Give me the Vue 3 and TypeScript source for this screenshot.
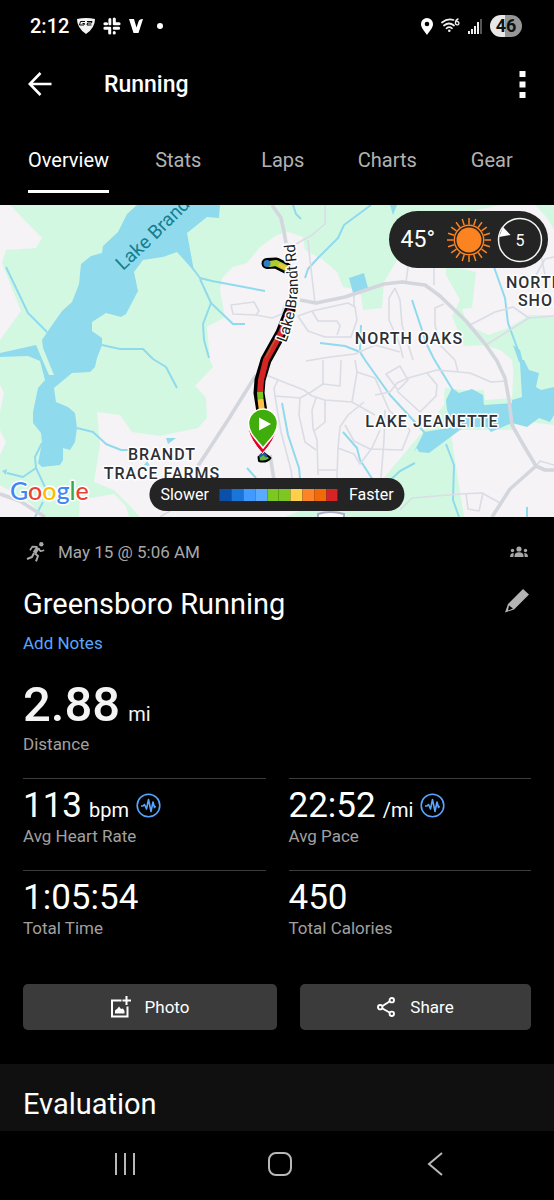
<script setup lang="ts">
import { ref } from 'vue'

interface Metric {
  value: string
  unit?: string
  label: string
  insight?: boolean
}

const tabs: string[] = ['Overview', 'Stats', 'Laps', 'Charts', 'Gear']
const activeTab = ref<string>('Overview')

const paceColors: string[] = [
  '#0b4fa8', '#1976d8', '#4299ff', '#5aabff', '#7cc820',
  '#7cc820', '#fdd04a', '#fc8426', '#f16a0a', '#d62323',
]

const metrics: Metric[] = [
  { value: '113', unit: 'bpm', label: 'Avg Heart Rate', insight: true },
  { value: '22:52', unit: '/mi', label: 'Avg Pace', insight: true },
  { value: '1:05:54', label: 'Total Time' },
  { value: '450', label: 'Total Calories' },
]

const sunRays: number[] = Array.from({ length: 20 }, (_, i) => i * 18)

const majorRoads: string[] = [
  'M272 205 L281 218 L284 232 L286 243',
  'M300 300 L316 303 L345 297 L384 284 L402 282 L425 285 L440 296 L466 321 L486 345 L497 361 L505 378 L509 400 L512 425 L524 446 L536 466',
  'M554 470 L545 470 L536 466 L510 489 L492 517',
  'M256 375 L228 420 L198 466',
  'M270 455 L274 480',
  'M0 494 L20 501 L45 517',
]

const minorRoads: string[] = [
  'M325 205 L325 224 L312 235 L296 244',
  'M308 240 L310 260 L315 303',
  'M231 305 L254 302 L259 311 L256 315 L233 314 Z',
  'M256 315 L272 318 L282 314 L285 302',
  'M298 316 L312 311 L348 303 L355 307 L357 320 L351 337 L325 337 L308 331 Z',
  'M312 311 L318 321 L337 321 L340 326 L337 335',
  'M354 296 L354 306',
  'M306 361 L330 357 L355 354 L375 345 L400 352',
  'M266 375 L286 383 L304 390 L312 396 L325 400 L352 402 L375 415',
  'M278 380 L274 388 L275 396 L300 398 L311 392 L323 384 L340 386 L341 360',
  'M300 398 L299 415 L305 442 L316 450',
  'M275 396 L281 432 L291 470 L292 478',
  'M316 398 L312 410 L313 428 L317 440 L318 475',
  'M325 400 L325 422 L314 431',
  'M323 384 L323 360',
  'M364 402 L348 415 L340 427 L338 448 L337 478',
  'M317 470 L338 470',
  'M338 448 L354 454 L360 464 L372 448 L380 430',
  'M345 425 L354 441 L370 449 L402 450 L410 430',
  'M355 360 L357 372 L352 402',
  'M357 372 L375 378 L389 410 L410 430',
  'M375 395 L390 392 L397 383 L408 378 L437 370 L470 373 L491 382 L507 381',
  'M386 374 L400 366 L408 380 L398 390 Z',
  'M427 373 L437 385 L436 396 L420 412 L397 391',
  'M385 410 L384 440 L381 478',
  'M406 282 L409 260',
  'M434 260 L434 285',
  'M395 288 L389 298 L389 320 L400 345 L403 358',
  'M395 288 L400 300 L402 325 L413 360',
  'M444 304 L435 308 L435 325 L440 345 L455 360',
  'M470 325 L495 312 L513 307 L529 318 L554 316',
  'M529 318 L510 330 L486 345',
  'M536 275 L545 259 L554 257',
  'M540 250 L545 275',
  'M400 510 L412 498 L460 494 L482 493 L500 503',
  'M466 493 L468 509 L479 511 L483 493',
  'M455 360 L458 372',
  'M536 466 L540 461 L554 465',
  'M160 517 L170 511',
]

const creeks: string[] = [
  'M6 267 L28 313 L47 332',
  'M188 262 L200 278 L212 281 L265 291',
  'M200 279 L211 303 L203 324 L204 340 L209 358',
  'M211 303 L233 324 L245 324',
  'M102 345 L120 349 L143 349 L153 359 L166 367 L177 388',
  'M77 428 L93 432 L106 444 L121 450 L128 450',
  'M42 443 L35 457 L36 468 L45 487',
  'M36 468 L23 477 L7 473',
  'M43 502 L35 517',
  'M293 205 L296 214 L301 219',
  'M371 205 L344 225 L338 238 L318 258 L308 269 L305 278',
  'M320 343 L345 346 L360 352 L365 360 L390 395 L425 433',
  'M361 325 L360 350',
  'M282 403 L288 435 L299 468 L300 478',
  'M343 432 L357 448 L360 460 L373 480',
  'M412 300 L427 345 L434 359 L454 392',
  'M494 267 L505 298 L508 323 L518 350',
  'M446 444 L454 465 L453 500 L459 517',
  'M415 463 L400 471 L385 485',
  'M247 468 L256 478',
  'M527 507 L527 517',
]
</script>

<template>
  <div class="screen">
    <header class="status">
      <div class="status-side">
        <span class="clock">2:12</span>
        <svg width="18" height="16" viewBox="0 0 18 16" aria-hidden="true">
          <path d="M0 1 Q9 -1 18 1 Q18 10 9 16 Q0 10 0 1Z" fill="#f4f4f4" />
          <path d="M8 3.500H3.500L2.500 7H7L7.500 5.500H5.500M10 3.500H15L14.500 5H10.500L10 7H14.500" fill="none" stroke="#000" stroke-width="1" />
        </svg>
        <svg width="18" height="18" viewBox="0 0 18 18" aria-hidden="true">
          <g fill="none" stroke="#fff" stroke-width="3.200" stroke-linecap="round">
            <path d="M7 2.500V7M2 6.800H3.500M11.200 2V6.800M11.200 6.800H16M2 11.200H6.800M6.800 11.200V16M11.200 11.200H15.500M11.200 15.500V16M15.800 6.800H16" />
          </g>
          <path d="M9 0V18M0 9H18" stroke="#000" stroke-width="1" />
        </svg>
        <svg width="14" height="14" viewBox="0 0 14 14" aria-hidden="true">
          <path d="M0 0H5L7.500 8.500L9.500 2.500Q10.200 0 13.500 0H14L9.500 14H4.500Z" fill="#fff" />
        </svg>
        <span class="dot"></span>
      </div>
      <div class="status-side">
        <svg width="12" height="17" viewBox="0 0 12 17" aria-hidden="true">
          <path d="M6 0A6 6 0 0 1 12 6C12 10 8.500 13 6 17C3.500 13 0 10 0 6A6 6 0 0 1 6 0Z" fill="#fff" />
          <circle cx="6" cy="6" r="2.300" fill="#000" />
        </svg>
        <svg width="19" height="16" viewBox="0 0 19 16" aria-hidden="true">
          <g fill="none" stroke="#eee" stroke-width="1.700" stroke-linecap="round">
            <path d="M1 4.500Q6.500 0 12.500 2M3 7.500Q8 3.500 13 7.500M5.500 10.300Q8.300 8 11 10.300" />
            <path d="M17 1Q14.500 2 14.500 5A1.700 1.700 0 1 0 16.300 3.500" stroke-width="1.400" />
          </g>
          <circle cx="8.300" cy="12.800" r="1.300" fill="#eee" />
        </svg>
        <svg width="14" height="15" viewBox="0 0 14 15" aria-hidden="true">
          <path d="M1 12V15M4 10V15M7 7V15M10 3V15" stroke="#eee" stroke-width="2" />
          <path d="M13 0V15" stroke="#555" stroke-width="2" />
        </svg>
        <span class="battery">46</span>
      </div>
    </header>

    <div class="appbar">
      <button class="icon-btn" type="button" aria-label="Back">
        <svg width="24" height="24" viewBox="0 0 24 24" aria-hidden="true">
          <path d="M12.500 1L1.800 12L12.500 23M2 12H23.500" fill="none" stroke="#fff" stroke-width="2.600" />
        </svg>
      </button>
      <h1>Running</h1>
      <button class="icon-btn" type="button" aria-label="More options">
        <svg width="7" height="27" viewBox="0 0 7 27" aria-hidden="true">
          <path d="M0.500 0H6.500V6H0.500ZM0.500 10.500H6.500V16.500H0.500ZM0.500 21H6.500V27H0.500Z" fill="#fff" />
        </svg>
      </button>
    </div>

    <nav class="tabs" aria-label="Activity sections">
      <button
        v-for="tab in tabs"
        :key="tab"
        type="button"
        class="tab"
        :class="{ active: tab === activeTab }"
        @click="activeTab = tab"
      >
        <span>{{ tab }}</span>
      </button>
    </nav>

    <section class="map" aria-label="Route map">
      <svg class="map-canvas" viewBox="0 205 554 312" preserveAspectRatio="xMidYMid slice">
        <rect x="0" y="205" width="554" height="312" fill="#d3f8e2" />
        <g fill="#f5f3f5">
          <path d="M0 205H10L42 238L36 248L6 250L2 263L21 311L0 340Z" />
          <path d="M0 385L4 393L0 412ZM0 430L6 442L0 455ZM0 485L30 503L45 517H0Z" />
          <path d="M80 500L114 494L126 506L129 517H79Z" />
          <path d="M97 412L120 415L132 432L160 436L198 428L207 418L206 398L200 391L195 386L213 367L210 360L207 327L225 317L220 290L222 278L233 267L247 263L260 247L277 235L288 232L303 237L305 250L323 260L337 272L343 287L360 290L363 310L382 308L384 282L396 262L420 222L500 205H540L554 230V315L530 315L505 332L500 350L514 360L512 399L484 402L483 392L445 388L444 405L420 435L384 478L374 500V517H140L130 506L114 490L94 482L100 445Z" />
          <path d="M450 430L512 420L554 425V517H464L458 480Z" />
        </g>
        <g fill="#d3f8e2">
          <path d="M446 265L476 272L472 308L462 309L468 325L488 335L508 328L530 315H554V385H515L512 360L500 350L485 345L464 346L452 316L460 300L446 275Z" />
          <path d="M420 435L450 428L458 480L464 517H374L384 478Z" />
          <path d="M285 517L300 511H400V517Z" />
          <path d="M535 205H554V225Z" />
          <path d="M444 392L484 390L485 400L515 398V430H450Z" />
        </g>
        <g fill="#90daee">
          <path d="M137 205L127 214L118 232L103 246L102 253L91 256L81 264L79 284L72 302L62 311L50 328L42 340L43 348L54 375L49 375L36 345L0 353V357L28 356L40 361L45 380L38 388L33 412L33 423L41 433L42 443L38 463L42 467L60 465L63 460L63 448L70 450L75 442L77 428L75 413L68 407L56 402L54 388L72 373L90 372L95 367L97 358L102 345L102 338L92 331V322L106 313L121 317L126 314L138 291L134 272L143 260L163 257L177 252L194 271L187 233L207 217L219 218L220 205Z" />
          <path d="M446 400L452 388L459 393L472 389L483 395L484 405L512 403V400L522 397L520 363L519 360H524L529 370L539 373L536 387L541 390L554 387V415L550 422L539 418L527 427L512 423L491 432L487 427H464L429 453L419 452L417 448L414 452L424 432L454 427L447 410Z" />
          <path d="M349 278L364 273L368 288L353 293Z" />
          <path d="M390 205H397L393 215ZM166 438L176 438L168 444ZM2 471L7 469L6 475Z" />
          <path d="M513 345L520 350L523 362H519ZM144 465L147 461L150 466Z" />
        </g>
        <g fill="none" stroke="#90daee" stroke-width="2" stroke-linejoin="round">
          <path v-for="(d, i) in creeks" :key="i" :d="d" />
        </g>
        <g fill="none" stroke="#dadde5" stroke-width="1.600" stroke-linejoin="round">
          <path v-for="(d, i) in minorRoads" :key="i" :d="d" />
        </g>
        <g fill="none" stroke="#d3d6dc" stroke-width="3.600" stroke-linejoin="round">
          <path v-for="(d, i) in majorRoads" :key="i" :d="d" />
        </g>
        <path d="M318 517V514Q330 510 344 514V517" fill="#fff" stroke="#a9afc8" stroke-width="2" />

        <g fill="none" stroke-linecap="round" stroke-linejoin="round">
          <path d="M267 263.500L276 263L286 268" stroke="#000" stroke-width="11" />
          <path d="M270 264L276 263L286 268" stroke="#a8cf2d" stroke-width="6" />
          <path d="M280 265L286 268" stroke="#e5c83c" stroke-width="4" />
          <circle cx="267" cy="263.500" r="3.500" fill="#2e7dc5" />
          <path d="M290 310L281 333L266 360L260 380L259 393L262 412" stroke="#000" stroke-width="11" />
          <path d="M290 310L281 333L266 360L261 380L260 393" stroke="#d62323" stroke-width="6" stroke-linecap="butt" />
          <path d="M276 338L266 357" stroke="#b4592b" stroke-width="1.500" />
          <path d="M260 392L260.500 399" stroke="#7cc820" stroke-width="6" stroke-linecap="butt" />
          <path d="M260.500 399L262 412" stroke="#fdc04a" stroke-width="6" stroke-linecap="butt" />
          <path d="M258.500 457L264 453L270.500 458Q266 463 259 461Z" fill="#62b63d" stroke="#000" stroke-width="2" />
          <path d="M260 456L263 453L266 456" stroke="#235a9c" stroke-width="2.500" />
        </g>

        <path d="M248 428Q250 440 262.500 453.500Q275 440 277 428Z" fill="#e4002b" stroke="#fff" stroke-width="1" />
        <path d="M263 409A14.500 14.500 0 0 1 277.500 423.500C277.500 433 270 439 263 448C256 439 248.500 433 248.500 423.500A14.500 14.500 0 0 1 263 409Z" fill="#3fae0c" stroke="#fff" stroke-width="1.500" />
        <path d="M259 417.500L271 424L259 430.500Z" fill="#fff" />

        <path id="lake-line" d="M123 271L155 241L174 222Q190 208 202 190" fill="none" />
        <path id="road-line" d="M286 343Q297 315 298 285Q297 265 294 236" fill="none" />
        <text class="water-label"><textPath href="#lake-line">Lake Brandt</textPath></text>
        <text class="road-label"><textPath href="#road-line">Lake Brandt Rd</textPath></text>
        <g class="area-label">
          <text x="409" y="344">NORTH OAKS</text>
          <text x="432" y="427">LAKE JEANETTE</text>
          <text x="162" y="460">BRANDT</text>
          <text x="162" y="479">TRACE FARMS</text>
          <text x="535" y="288">NORTH</text>
          <text x="546" y="306">SHORE</text>
        </g>
        <text class="brand" x="10" y="500"><tspan fill="#4285f4">G</tspan><tspan fill="#ea4335">o</tspan><tspan fill="#fbbc05">o</tspan><tspan fill="#4285f4">g</tspan><tspan fill="#34a853">l</tspan><tspan fill="#ea4335">e</tspan></text>
      </svg>

      <div class="weather">
        <span class="temp">45°</span>
        <svg width="46" height="46" viewBox="0 0 46 46" aria-hidden="true">
          <circle cx="23" cy="23" r="12.500" fill="#fc8420" />
          <circle cx="23" cy="23" r="14.700" fill="none" stroke="#fc8420" stroke-width="1.400" />
          <path v-for="a in sunRays" :key="a" d="M23 7.500V1" :transform="`rotate(${a} 23 23)`" stroke="#fc8420" stroke-width="1.500" />
        </svg>
        <svg width="46" height="46" viewBox="0 0 46 46" aria-hidden="true">
          <circle cx="23" cy="23" r="21.500" fill="none" stroke="#f4f4f4" stroke-width="1.500" />
          <path d="M6 10L13.500 18L2 20Z" fill="#fff" />
          <text x="23" y="29" class="wind">5</text>
        </svg>
      </div>

      <div class="legend">
        <span>Slower</span>
        <span class="scale">
          <i v-for="(c, i) in paceColors" :key="i" :style="{ background: c }"></i>
        </span>
        <span>Faster</span>
      </div>
    </section>

    <main class="details">
      <div class="meta">
        <svg width="20" height="20" viewBox="0 0 20 20" aria-hidden="true">
          <circle cx="15.300" cy="2.300" r="2.200" fill="#a8a8a8" />
          <g fill="none" stroke="#a8a8a8" stroke-linejoin="round">
            <path d="M12 5.500L8.500 11" stroke-width="4" />
            <path d="M11.500 4.800L6.500 4.600L4 8.300M12.500 6.500L14.500 9.200L18.200 8.200" stroke-width="1.700" />
            <path d="M8 11L6 15L1 17M9 11.500L12 14L10 19.300" stroke-width="2" />
          </g>
        </svg>
        <time>May 15 @ 5:06 AM</time>
        <svg class="people" width="20" height="12" viewBox="0 0 20 12" aria-hidden="true">
          <g fill="#a8a8a8">
            <circle cx="10" cy="3" r="2.600" />
            <path d="M5.500 11V9.500Q6 6.300 10 6.300T14.500 9.500V11Z" />
            <circle cx="3.500" cy="4.500" r="1.700" />
            <circle cx="16.500" cy="4.500" r="1.700" />
            <path d="M1 11L1.500 8.500Q2 7 4.800 7L4.300 11ZM19 11L18.500 8.500Q18 7 15.200 7L15.700 11Z" />
          </g>
        </svg>
      </div>

      <div class="title-row">
        <h2>Greensboro Running</h2>
        <button class="icon-btn" type="button" aria-label="Edit title">
          <svg width="24" height="24" viewBox="0 0 24 24" aria-hidden="true">
            <path d="M18 0L24 5.500L9 20.500L0 23.500L3 15ZM4 16.500L3 21.500L8 19.500Z" fill="#b4b4b4" fill-rule="evenodd" />
          </svg>
        </button>
      </div>
      <a class="notes" href="#notes">Add Notes</a>

      <div class="distance">
        <p class="figure"><strong>2.88</strong><span>mi</span></p>
        <p class="label">Distance</p>
      </div>

      <div class="metrics">
        <div v-for="m in metrics" :key="m.label" class="metric">
          <p class="value">
            <b>{{ m.value }}</b>
            <span v-if="m.unit">{{ m.unit }}</span>
            <svg v-if="m.insight" width="25" height="25" viewBox="0 0 25 25" aria-hidden="true">
              <circle cx="12.500" cy="12.500" r="11.300" fill="none" stroke="#58a6ff" stroke-width="1.600" />
              <path d="M5 13H7L8.500 11.500L10.500 16L12.500 6.500L15 18.500L17 9L18.500 14.500L19.500 13" fill="none" stroke="#58a6ff" stroke-width="1.600" stroke-linejoin="round" />
            </svg>
          </p>
          <p class="label">{{ m.label }}</p>
        </div>
      </div>

      <div class="actions">
        <button type="button">
          <svg width="20" height="22" viewBox="0 0 20 22" aria-hidden="true">
            <path d="M10.500 4.500H1V20.500H16.500V10.500M15.500 0V9M11.500 4.500H20" fill="none" stroke="#fff" stroke-width="2" />
            <path d="M4 17.500V14.500L6.500 12.500L8 10.500L10 13L12 12.500L13.500 15V17.500Z" fill="#fff" />
          </svg>
          Photo
        </button>
        <button type="button">
          <svg width="19" height="20" viewBox="0 0 19 20" aria-hidden="true">
            <g fill="none" stroke="#fff" stroke-width="1.900">
              <path d="M5.500 9L12.500 4.500M5.500 11.500L12.500 15.500" />
              <circle cx="3.200" cy="10.200" r="2.200" />
              <circle cx="14.800" cy="3.200" r="2.200" />
              <circle cx="14.800" cy="16.800" r="2.200" />
            </g>
          </svg>
          Share
        </button>
      </div>
    </main>

    <section class="evaluation">
      <h2>Evaluation</h2>
    </section>

    <footer class="system-nav">
      <button class="icon-btn" type="button" aria-label="Recent apps">
        <svg width="22" height="24" viewBox="0 0 22 24" aria-hidden="true">
          <path d="M2 1V23M11 1V23M20 1V23" stroke="#b8b8b8" stroke-width="2" />
        </svg>
      </button>
      <button class="icon-btn" type="button" aria-label="Home">
        <svg width="24" height="24" viewBox="0 0 24 24" aria-hidden="true">
          <rect x="1" y="1" width="22" height="22" rx="7" fill="none" stroke="#b8b8b8" stroke-width="2" />
        </svg>
      </button>
      <button class="icon-btn" type="button" aria-label="Go back">
        <svg width="16" height="24" viewBox="0 0 16 24" aria-hidden="true">
          <path d="M15 1L2 12L15 23" fill="none" stroke="#b8b8b8" stroke-width="2" />
        </svg>
      </button>
    </footer>
  </div>
</template>

<style>
body {
  margin: 0;
  background: #000;
}
</style>

<style scoped>
.screen {
  min-height: 100vh;
  display: flex;
  flex-direction: column;
  background: #000;
  color: #fff;
  font-family: Roboto, "Liberation Sans", sans-serif;
}

h1, h2, p {
  margin: 0;
  font-weight: 400;
}

button {
  margin: 0;
  padding: 0;
  border: 0;
  background: none;
  color: inherit;
  font: inherit;
}

svg {
  display: block;
  flex: none;
}

.icon-btn {
  display: flex;
  align-items: center;
  justify-content: center;
}

.status {
  display: flex;
  justify-content: space-between;
  align-items: center;
  height: 52px;
  padding: 0 32px 0 30px;
}

.status-side {
  display: flex;
  align-items: center;
  gap: 8px;
}

.clock {
  font-size: 20px;
  font-weight: 500;
}

.dot {
  width: 6px;
  height: 6px;
  margin-left: 6px;
  border-radius: 50%;
  background: #fff;
}

.battery {
  width: 32px;
  border-radius: 11px;
  background: linear-gradient(90deg, #e8e8e8 46%, #969696 46%);
  color: #111;
  font-size: 18px;
  font-weight: 700;
  line-height: 22px;
  text-align: center;
}

.appbar {
  display: flex;
  align-items: center;
  height: 64px;
  padding: 0 28px;
}

.appbar h1 {
  flex: 1;
  margin-left: 52px;
  font-size: 23px;
  font-weight: 500;
}

.tabs {
  display: grid;
  grid-template-columns: 115px repeat(4, 1fr);
  height: 77px;
  padding: 0 10px 12px 11px;
}

.tab {
  display: flex;
  justify-content: center;
  color: #b2b2b2;
  font-size: 20px;
}

.tab span {
  display: flex;
  align-items: center;
  height: 100%;
  padding-top: 13px;
  box-sizing: border-box;
  border-bottom: 3px solid transparent;
}

.tab.active {
  color: #fff;
}

.tab.active span {
  border-color: #fff;
}

.map {
  position: relative;
  height: 312px;
}

.map-canvas {
  width: 100%;
  height: 100%;
}

.map-canvas text {
  paint-order: stroke;
  stroke-linejoin: round;
}

.water-label {
  fill: #14808f;
  font-size: 19px;
}

.road-label {
  fill: #222;
  stroke: #fff;
  stroke-width: 3px;
  font-size: 15px;
}

.area-label {
  fill: #2d3035;
  stroke: #fff;
  stroke-width: 3px;
  font-size: 16px;
  font-weight: 500;
  letter-spacing: 1px;
  text-anchor: middle;
}

.brand {
  stroke: #fff;
  stroke-width: 3px;
  font-family: Lato, sans-serif;
  font-size: 25px;
  font-weight: 500;
}

.weather {
  position: absolute;
  top: 6px;
  right: 6px;
  display: flex;
  align-items: center;
  gap: 5px;
  height: 57px;
  padding: 0 5px 0 12px;
  border-radius: 29px;
  background: #242424;
}

.temp {
  margin-right: 6px;
  font-size: 23px;
}

.wind {
  fill: #fff;
  font-size: 16px;
  text-anchor: middle;
}

.legend {
  position: absolute;
  bottom: 6px;
  left: 50%;
  display: flex;
  align-items: center;
  gap: 11px;
  height: 33px;
  padding: 0 11px;
  border-radius: 17px;
  background: #242424;
  font-size: 16px;
  transform: translateX(-50%);
}

.scale {
  display: flex;
  width: 118px;
  height: 12px;
}

.scale i {
  flex: 1;
}

.details {
  padding: 0 23px 34px;
}

.meta {
  display: flex;
  align-items: center;
  height: 70px;
  padding: 0 2px 0 3px;
  color: #a8a8a8;
  font-size: 17px;
}

.meta time {
  margin-left: 12px;
}

.people {
  margin-left: auto;
}

.title-row {
  display: flex;
  justify-content: space-between;
  align-items: center;
  height: 34px;
  padding-right: 2px;
}

.title-row .icon-btn {
  padding-bottom: 6px;
}

.title-row h2,
.evaluation h2 {
  font-size: 29px;
  line-height: 34px;
}

.notes {
  display: block;
  width: fit-content;
  margin-top: 12px;
  color: #58a6ff;
  font-size: 17px;
  line-height: 20px;
  text-decoration: none;
}

.distance {
  padding-top: 32px;
}

.figure {
  display: flex;
  align-items: baseline;
  gap: 8px;
  color: #f4f4f4;
  font-size: 20px;
  line-height: 40px;
}

.figure strong {
  font-size: 49px;
  font-weight: 500;
}

.label {
  color: #a0a0a0;
  font-size: 17px;
  line-height: 20px;
}

.metrics {
  display: grid;
  grid-template-columns: 1fr 1fr;
  column-gap: 23px;
  margin-top: 24px;
}

.metric {
  height: 92px;
  box-sizing: border-box;
  border-top: 1px solid #3c3c3c;
  padding-top: 6px;
}

.value {
  display: flex;
  align-items: baseline;
  gap: 7px;
  height: 41px;
  font-size: 20px;
  line-height: 41px;
}

.value b {
  font-size: 35px;
  font-weight: 400;
}

.value svg {
  align-self: center;
}

.actions {
  display: grid;
  grid-template-columns: 11fr 10fr;
  gap: 23px;
  margin-top: 22px;
}

.actions button {
  display: flex;
  justify-content: center;
  align-items: center;
  gap: 14px;
  height: 46px;
  border-radius: 5px;
  background: #3b3b3b;
  font-size: 17px;
}

.evaluation {
  flex: 1;
  padding: 23px 23px 10px;
  background: #101010;
}

.system-nav {
  display: grid;
  grid-template-columns: repeat(3, 1fr);
  height: 69px;
  padding: 0 42px 3px 47px;
  box-sizing: border-box;
  background: #000;
}
</style>
